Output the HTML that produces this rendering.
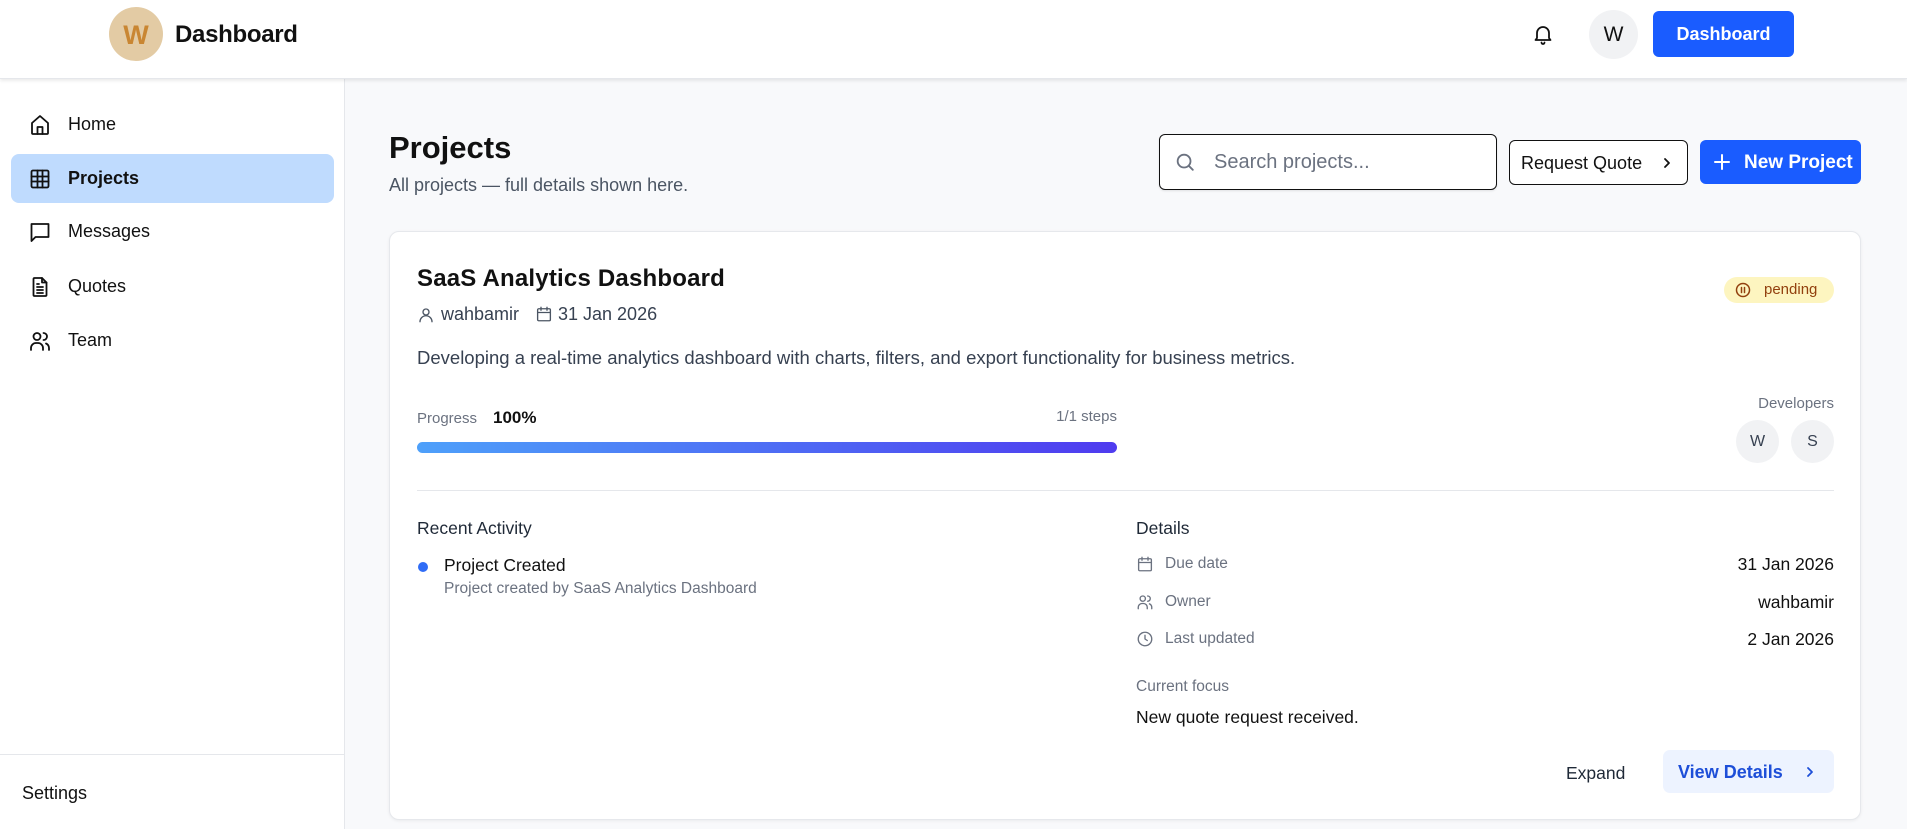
<!DOCTYPE html>
<html><head><meta charset="utf-8"><style>
*{box-sizing:border-box;margin:0;padding:0}
body{width:1907px;height:829px;overflow:hidden;font-family:"Liberation Sans",Arial,sans-serif;background:#f8f9fb;color:#111;position:relative}
.a{position:absolute;white-space:nowrap}
.hdr{position:absolute;left:0;top:0;width:1907px;height:79px;background:#fff;box-shadow:0 2px 3px rgba(0,0,0,.08);border-bottom:1px solid #e5e7eb;z-index:2}
.side{position:absolute;left:0;top:79px;width:345px;height:750px;background:#fff;border-right:1px solid #e5e7eb}
.nav{position:absolute;left:11px;width:323px;height:49px;border-radius:8px;display:flex;align-items:center;font-size:18px}
.nav svg{position:absolute;left:17px}
.nav span{position:absolute;left:57px}
.card{position:absolute;left:389px;top:231px;width:1472px;height:589px;background:#fff;border:1px solid #e6e8ec;border-radius:10px;box-shadow:0 1px 3px rgba(0,0,0,.06)}
.g{color:#6b7280}
svg{fill:none;stroke-linecap:round;stroke-linejoin:round}
</style></head><body>
<div class="hdr">
  <div class="a" style="left:109px;top:7px;width:54px;height:54px;border-radius:50%;background:#e3cba4;color:#c98632;font-size:27px;font-weight:bold;text-align:center;line-height:56px">W</div>
  <div class="a" style="left:175px;top:21px;font-size:24px;font-weight:bold;letter-spacing:-0.3px">Dashboard</div>
  <svg class="a" style="left:1531px;top:22px" width="24" height="24" viewBox="0 0 24 24" stroke="#111" stroke-width="1.8"><path d="M6 16V11a6 6 0 0 1 12 0v5l1.5 2h-15z"/><path d="M10.5 20.5a1.5 1.5 0 0 0 3 0"/></svg>
  <div class="a" style="left:1589px;top:10px;width:49px;height:49px;border-radius:50%;background:#f1f2f4;text-align:center;line-height:49px;font-size:21px">W</div>
  <div class="a" style="left:1653px;top:11px;width:141px;height:46px;border-radius:6px;background:#1a5cff;color:#fff;font-weight:bold;font-size:18px;text-align:center;line-height:46px">Dashboard</div>
</div>
<div class="side">
  <div class="nav" style="top:21px"><svg width="24" height="24" viewBox="0 0 24 24" stroke="#111" stroke-width="1.8"><path d="M4 10l8-7 8 7v10a1 1 0 0 1-1 1H5a1 1 0 0 1-1-1z"/><path d="M9.5 21v-7h5v7"/></svg><span>Home</span></div>
  <div class="nav" style="top:75px;background:#bfdbfe;font-weight:bold"><svg width="24" height="24" viewBox="0 0 24 24" stroke="#111" stroke-width="1.8"><rect x="3.5" y="3.5" width="17" height="17" rx="1.5"/><path d="M3.5 9.5h17M3.5 14.5h17M9.5 3.5v17M14.5 3.5v17"/></svg><span>Projects</span></div>
  <div class="nav" style="top:128px"><svg width="24" height="24" viewBox="0 0 24 24" stroke="#111" stroke-width="1.8"><path d="M3.5 4h17v13H7.5l-4 4z"/></svg><span>Messages</span></div>
  <div class="nav" style="top:183px"><svg width="24" height="24" viewBox="0 0 24 24" stroke="#111" stroke-width="1.8"><path d="M14 3H6.5a1 1 0 0 0-1 1v16a1 1 0 0 0 1 1h11a1 1 0 0 0 1-1V7.5z"/><path d="M14 3v4.5h4.5M9 12h6M9 15h6M9 18h6M9 9h2"/></svg><span>Quotes</span></div>
  <div class="nav" style="top:237px"><svg width="24" height="24" viewBox="0 0 24 24" stroke="#111" stroke-width="1.8"><circle cx="9" cy="7.5" r="3.5"/><path d="M3 21v-2a5 5 0 0 1 5-5h2a5 5 0 0 1 5 5v2M15.5 4a3.5 3.5 0 0 1 0 7M18 14.5a5 5 0 0 1 3 4.5v2"/></svg><span>Team</span></div>
  <div class="a" style="left:0;top:675px;width:344px;border-top:1px solid #e5e7eb"></div>
  <div class="a" style="left:22px;top:704px;font-size:18px">Settings</div>
</div>
<div class="a" style="left:389px;top:130px;font-size:31px;font-weight:bold">Projects</div>
<div class="a" style="left:389px;top:175px;font-size:18px;color:#4b5563">All projects — full details shown here.</div>
<div class="a" style="left:1159px;top:134px;width:338px;height:56px;border:1.5px solid #111;border-radius:6px;background:#fff;box-shadow:0 1px 2px rgba(0,0,0,.1)">
  <svg class="a" style="left:14px;top:16px" width="22" height="22" viewBox="0 0 24 24" stroke="#6b7280" stroke-width="2"><circle cx="11" cy="11" r="7"/><path d="M16 16l4.5 4.5"/></svg>
  <div class="a" style="left:54px;top:16px;font-size:20px;color:#6b7280">Search projects...</div>
</div>
<div class="a" style="left:1509px;top:140px;width:179px;height:45px;border:1.5px solid #111;border-radius:6px;background:#fff;font-size:18px;line-height:44px;padding-left:11px">Request Quote<svg class="a" style="left:150px;top:15px" width="14" height="14" viewBox="0 0 14 14" stroke="#111" stroke-width="1.8"><path d="M5 3l4 4-4 4"/></svg></div>
<div class="a" style="left:1700px;top:140px;width:161px;height:44px;border-radius:6px;background:#1a5cff;color:#fff;font-size:19px;font-weight:bold;line-height:46px;padding-left:44px"><svg class="a" style="left:12px;top:12px" width="20" height="20" viewBox="0 0 20 20" stroke="#fff" stroke-width="2"><path d="M10 3v14M3 10h14"/></svg>New Project</div>

<div class="card">
  <div class="a" style="left:27px;top:33px;font-size:24px;font-weight:bold;letter-spacing:0.2px">SaaS Analytics Dashboard</div>
  <svg class="a" style="left:27px;top:74px" width="18" height="18" viewBox="0 0 24 24" stroke="#4b5563" stroke-width="1.8"><circle cx="12" cy="8" r="4"/><path d="M4 21a8 8 0 0 1 16 0"/></svg>
  <div class="a" style="left:51px;top:72px;font-size:18px;color:#374151">wahbamir</div>
  <svg class="a" style="left:145px;top:73px" width="18" height="18" viewBox="0 0 24 24" stroke="#4b5563" stroke-width="1.8"><rect x="3.5" y="5" width="17" height="16" rx="1.5"/><path d="M3.5 10h17M8 3v4M16 3v4"/></svg>
  <div class="a" style="left:168px;top:72px;font-size:18px;color:#374151">31 Jan 2026</div>
  <div class="a" style="left:1334px;top:45px;width:110px;height:26px;border-radius:13px;background:#fdf5c0;color:#92400e;font-size:15px;line-height:26px;padding-left:40px"><svg class="a" style="left:11px;top:5px" width="16" height="16" viewBox="0 0 16 16" stroke="#92400e" stroke-width="1.5"><circle cx="8" cy="8" r="6.5"/><path d="M6.5 5.5v5M9.5 5.5v5"/></svg>pending</div>
  <div class="a" style="left:27px;top:115px;font-size:18.5px;color:#374151">Developing a real-time analytics dashboard with charts, filters, and export functionality for business metrics.</div>
  <div class="a g" style="left:27px;top:178px;font-size:15px">Progress</div>
  <div class="a" style="left:103px;top:176px;font-size:17px;font-weight:bold">100%</div>
  <div class="a g" style="left:27px;width:700px;text-align:right;top:176px;font-size:15px">1/1 steps</div>
  <div class="a" style="left:27px;top:210px;width:700px;height:11px;border-radius:6px;background:linear-gradient(90deg,#4ea0fa,#4f3bef)"></div>
  <div class="a g" style="left:1344px;width:100px;text-align:right;top:163px;font-size:15px">Developers</div>
  <div class="a" style="left:1346px;top:188px;width:43px;height:43px;border-radius:50%;background:#f1f2f4;text-align:center;line-height:43px;font-size:16px;color:#374151">W</div>
  <div class="a" style="left:1401px;top:188px;width:43px;height:43px;border-radius:50%;background:#f1f2f4;text-align:center;line-height:43px;font-size:16px;color:#374151">S</div>
  <div class="a" style="left:27px;top:258px;width:1417px;border-top:1px solid #e5e7eb"></div>
  <div class="a" style="left:27px;top:286px;font-size:17.5px;color:#1f2937">Recent Activity</div>
  <div class="a" style="left:28px;top:330px;width:10px;height:10px;border-radius:50%;background:#2f6cf6"></div>
  <div class="a" style="left:54px;top:323px;font-size:17.5px">Project Created</div>
  <div class="a g" style="left:54px;top:348px;font-size:15.5px">Project created by SaaS Analytics Dashboard</div>
  <div class="a" style="left:746px;top:286px;font-size:17.5px;color:#1f2937">Details</div>
  <svg class="a" style="left:746px;top:323px" width="18" height="18" viewBox="0 0 24 24" stroke="#6b7280" stroke-width="1.8"><rect x="3.5" y="5" width="17" height="16" rx="1.5"/><path d="M3.5 10h17M8 3v4M16 3v4"/></svg>
  <div class="a g" style="left:775px;top:323px;font-size:15.5px">Due date</div>
  <div class="a" style="right:26px;top:322px;font-size:17.5px">31 Jan 2026</div>
  <svg class="a" style="left:746px;top:361px" width="18" height="18" viewBox="0 0 24 24" stroke="#6b7280" stroke-width="1.8"><circle cx="9" cy="7.5" r="3.5"/><path d="M3 21v-2a5 5 0 0 1 5-5h2a5 5 0 0 1 5 5v2M15.5 4a3.5 3.5 0 0 1 0 7M18 14.5a5 5 0 0 1 3 4.5v2"/></svg>
  <div class="a g" style="left:775px;top:361px;font-size:15.5px">Owner</div>
  <div class="a" style="right:26px;top:360px;font-size:17.5px">wahbamir</div>
  <svg class="a" style="left:746px;top:398px" width="18" height="18" viewBox="0 0 24 24" stroke="#6b7280" stroke-width="1.8"><circle cx="12" cy="12" r="9"/><path d="M12 7v5l3 2"/></svg>
  <div class="a g" style="left:775px;top:398px;font-size:15.5px">Last updated</div>
  <div class="a" style="right:26px;top:397px;font-size:17.5px">2 Jan 2026</div>
  <div class="a g" style="left:746px;top:446px;font-size:15.5px">Current focus</div>
  <div class="a" style="left:746px;top:475px;font-size:17.5px">New quote request received.</div>
  <div class="a" style="left:1176px;top:531px;font-size:17.5px;color:#1f2937">Expand</div>
  <div class="a" style="left:1273px;top:518px;width:171px;height:43px;border-radius:7px;background:#edf3ff;color:#1d4ed8;font-weight:bold;font-size:18px;line-height:44px;padding-left:15px">View Details<svg class="a" style="left:140px;top:15px" width="14" height="14" viewBox="0 0 14 14" stroke="#1d4ed8" stroke-width="1.8"><path d="M5 3l4 4-4 4"/></svg></div>
</div>
</body></html>
